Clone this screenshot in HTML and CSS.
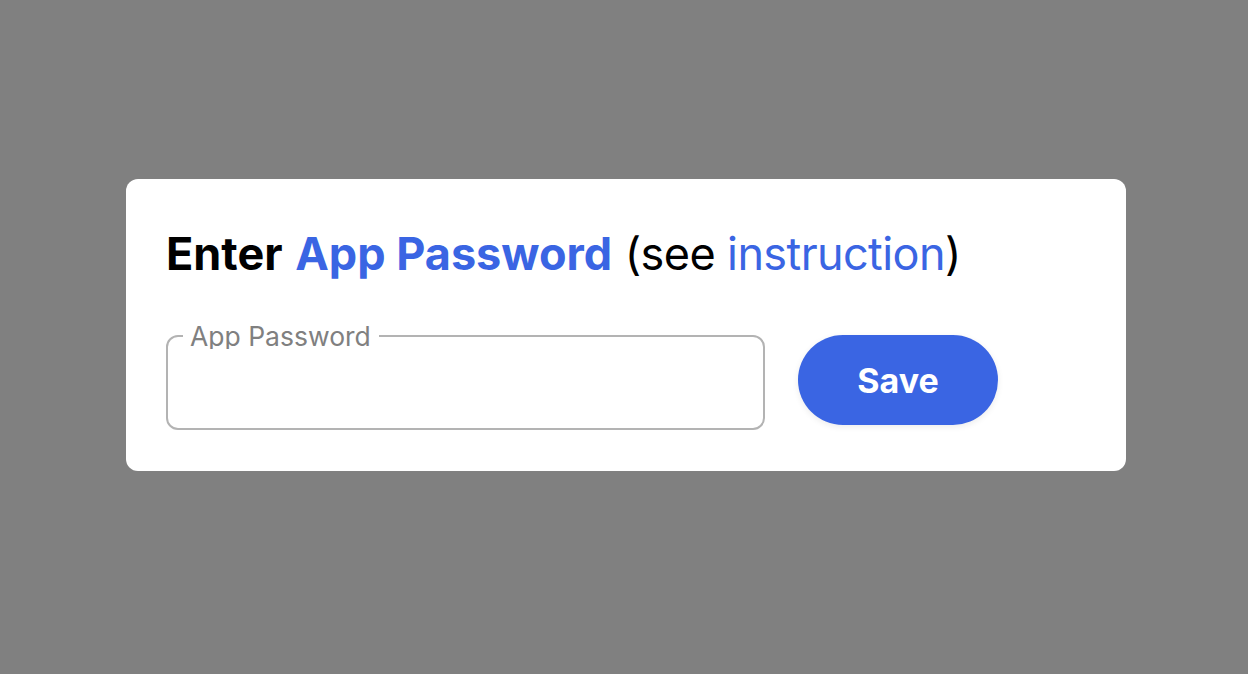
FILE: index.html
```html
<!DOCTYPE html>
<html lang="en">
<head>
    <meta charset="UTF-8">
    <meta name="viewport" content="width=device-width, initial-scale=1.0">
    <title>App Password</title>
    <link rel="stylesheet" href="styles.css">
</head>
<body>
    <main class="card">
        <h1 class="title">
            <span class="strong">Enter</span> <span class="strong accent">App Password</span>
            <span class="hint">(see <a href="#" class="link">instruction</a>)</span>
        </h1>

        <form class="row">
            <fieldset class="field">
                <legend>App Password</legend>
                <input type="password" id="appPassword" name="password">
            </fieldset>
            <button type="submit">Save</button>
        </form>
    </main>
</body>
</html>
```

FILE: styles.css
```css
body {
    font-family: Inter, "Noto Sans", sans-serif;
    background-color: #808080;
    margin: 0;
    padding: 179px 0 0 126px;
}

.card {
    width: 1000px;
    box-sizing: border-box;
    background-color: #fff;
    border-radius: 12px;
    padding: 40px 40px 41px 40px;
}

.title {
    margin: 0 0 47px 0;
    font-size: 45px;
    font-weight: 400;
    line-height: 69px;
    color: #000;
}

.strong {
    font-weight: 700;
}

.hint {
    letter-spacing: -0.6px;
}

.accent,
.link {
    color: #3a65e3;
}

.link {
    text-decoration: none;
}

.row {
    display: flex;
    align-items: flex-start;
    gap: 33px;
}

.field {
    width: 599px;
    height: 107px;
    box-sizing: border-box;
    margin: -12px 0 0 0;
    padding: 0 15px;
    border: 2px solid #b3b3b3;
    border-radius: 12px;
}

.field legend {
    padding: 0 8px 0 7px;
    font-size: 26.5px;
    line-height: 26px;
    color: #808080;
}

.field input {
    width: 100%;
    border: none;
    outline: none;
    font-size: 24px;
    padding: 18px 8px;
    box-sizing: border-box;
}

button {
    width: 200px;
    height: 90px;
    background-color: #3a65e3;
    color: #fff;
    border: none;
    border-radius: 45px;
    font-family: inherit;
    font-size: 34px;
    font-weight: 700;
    cursor: pointer;
    box-shadow: 0 2px 6px rgba(0, 0, 0, 0.08);
}
```
